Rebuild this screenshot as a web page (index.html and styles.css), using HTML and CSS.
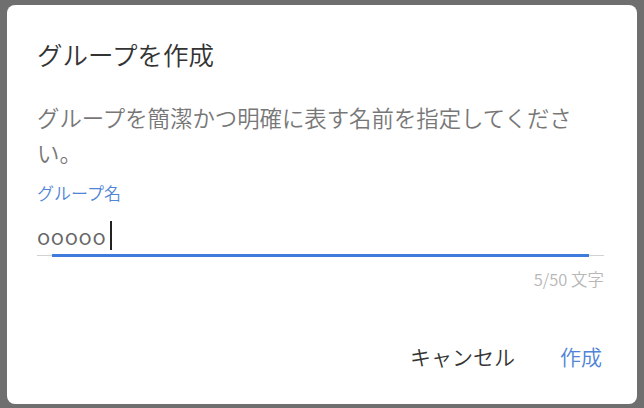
FILE: index.html
```html
<!DOCTYPE html>
<html lang="ja">
<head>
<meta charset="utf-8">
<link rel="stylesheet" href="styles.css">
</head>
<body>
<div class="dialog">
  <h1 class="title">グループを作成</h1>
  <p class="desc">グループを簡潔かつ明確に表す名前を指定してください。</p>
  <div class="label">グループ名</div>
  <div class="field"><span class="value">ooooo</span><span class="caret"></span></div>
  <div class="underline"></div>
  <div class="counter">5/50 文字</div>
  <div class="actions">
    <span class="btn cancel">キャンセル</span>
    <span class="btn create">作成</span>
  </div>
</div>
</body>
</html>
```
FILE: styles.css
```css
html, body {
  margin: 0;
  padding: 0;
  background: #6f6f6f;
  width: 644px;
  height: 408px;
  overflow: hidden;
}
body {
  font-family: "Noto Sans CJK JP", "Noto Sans", sans-serif;
  font-weight: 350;
  padding: 5px 7px 0 7px;
  box-sizing: border-box;
}
.dialog {
  width: 630px;
  height: 399px;
  background: #ffffff;
  border-radius: 8px;
  box-sizing: border-box;
  padding: 34px 33px 0 30px;
}
.title {
  margin: 0;
  font-size: 25.5px;
  line-height: 30px;
  font-weight: 350;
  color: #333333;
}
.desc {
  margin: 31px 0 0 0;
  font-size: 22.4px;
  line-height: 35px;
  color: #777777;
}
.label {
  margin-top: 12px;
  font-size: 17px;
  line-height: 22px;
  color: #4f84d6;
}
.field {
  margin-top: 17px;
  height: 29px;
  display: flex;
  align-items: stretch;
  font-size: 22px;
  line-height: 29px;
  color: #666666;
}
.value {
  letter-spacing: 0.6px;
}
.caret {
  width: 2px;
  margin-left: 4px;
  background: #222222;
}
.underline {
  margin-top: 5px;
  height: 1px;
  background: #d2d2d2;
  position: relative;
}
.underline::after {
  content: "";
  position: absolute;
  left: 15px;
  right: 15px;
  top: -1px;
  height: 3px;
  background: #3f7bdc;
}
.counter {
  margin-top: 13px;
  text-align: right;
  font-size: 16.5px;
  line-height: 20px;
  color: #b8b8b8;
}
.actions {
  margin-top: 53px;
  display: flex;
  justify-content: flex-end;
  gap: 45px;
  padding-right: 2px;
}
.btn {
  font-size: 21px;
  line-height: 28px;
}
.cancel {
  color: #333333;
}
.create {
  color: #4f84d6;
}
```
